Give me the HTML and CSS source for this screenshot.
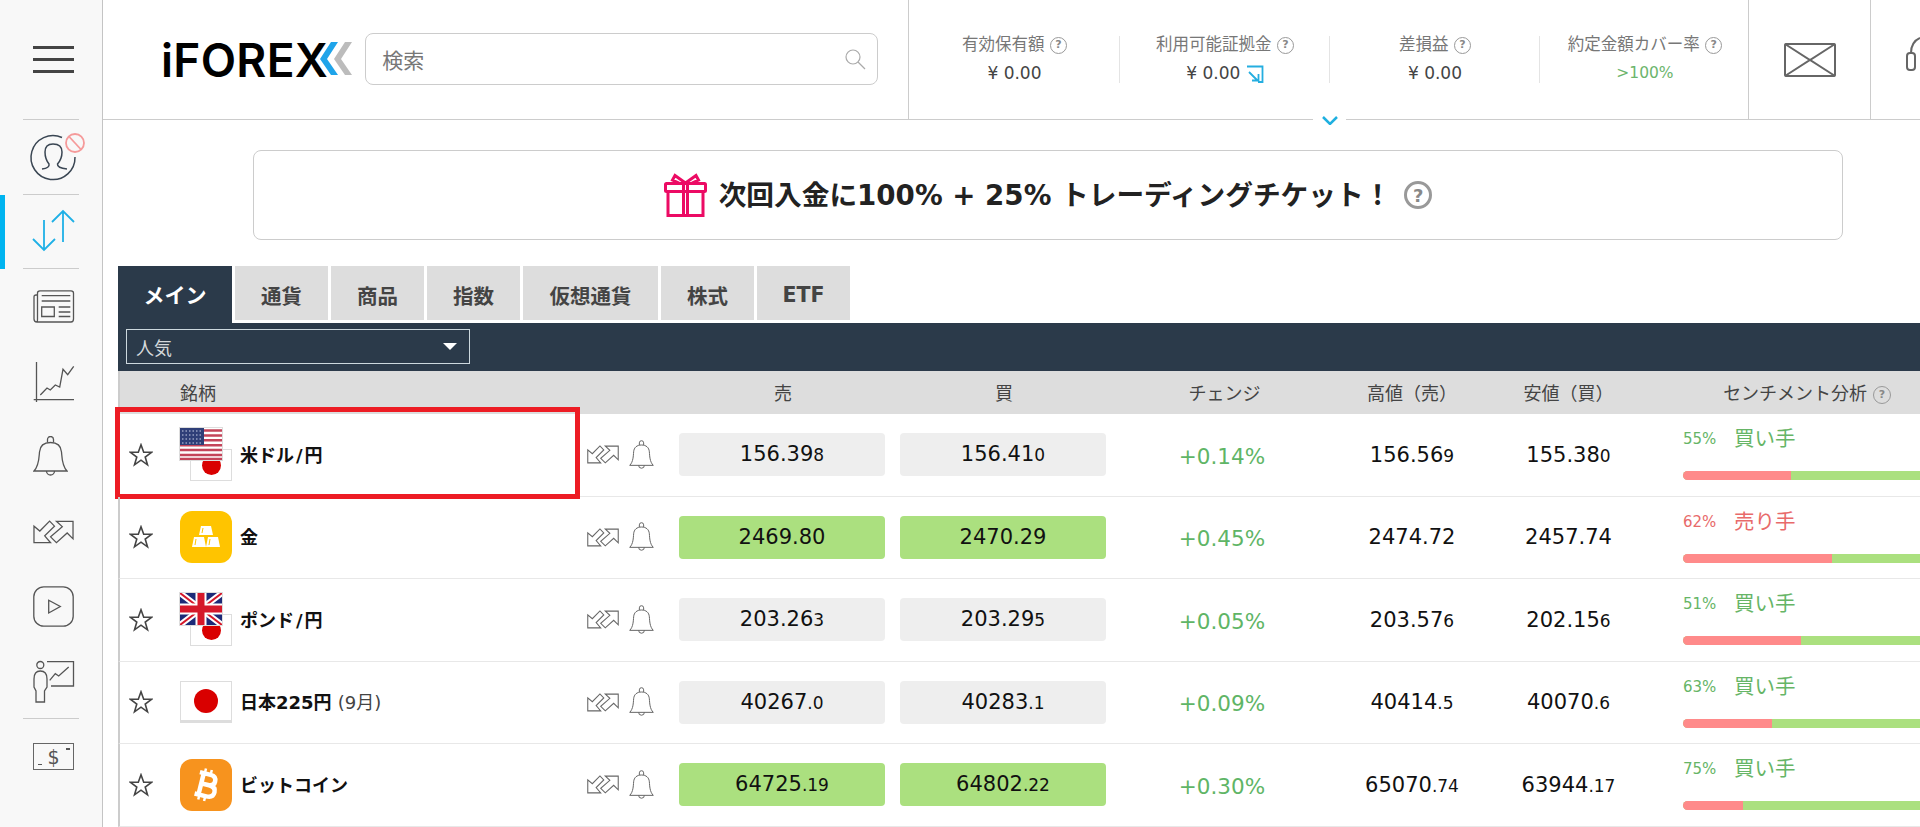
FILE: index.html
```html
<!DOCTYPE html>
<html lang="ja">

<head>
    <meta charset="UTF-8">
    <meta name="viewport" content="width=device-width, initial-scale=1.0">
    <title>iFOREX</title>
    <link rel="stylesheet" href="styles.css">
</head>

<body>
    <svg class="sprites" aria-hidden="true">
        <symbol id="icon-exchange" viewBox="0 0 42 24">
            <path d="M1 23V6L7 11L17 .8L22 6L12 16L18 23Z" />
            <path d="M41 1H24L30 6.500L18 17L24 23L35 13L41 19Z" />
        </symbol>
        <symbol id="icon-bell" viewBox="0 0 35 41">
            <path d="M1 35C6 30 6 22 6.500 16C7 10 11 6.500 17.500 6.500C24 6.500 28 10 28.500 16C29 22 29 30 34 35Z" />
            <path d="M14.500 6.500V3.500a3 3 0 0 1 6 0V6.500M13.500 35a4 4 0 0 0 8 0" />
        </symbol>
        <symbol id="icon-star" viewBox="0 0 24 24">
            <path d="M12 1.800L14.700 9.300H22.500L16.200 14L18.500 21.800L12 17.200L5.500 21.800L7.800 14L1.500 9.300H9.300Z" />
        </symbol>
    </svg>

    <div class="app">
        <nav class="sidebar">
            <div class="menu-cell">
                <span class="burger"></span>
            </div>
            <div class="side-cell">
                <svg class="cell-icon" viewBox="0 0 102 75">
                    <g fill="none" stroke="#3a4653" stroke-width="1.500">
                        <path d="M62 18.500A22 22 0 1 0 75 38" />
                        <path d="M42 50Q50 49 49 45Q45 40 45 33Q45 25 53 25Q62 25 62 33Q62 40 57.500 45Q57 49 67 50" />
                    </g>
                    <g fill="none" stroke="#f59a9a" stroke-width="1.800">
                        <circle cx="75" cy="24" r="9" />
                        <path d="M69 17.500L81 30.500" />
                    </g>
                </svg>
            </div>
            <div class="side-cell side-active">
                <svg class="cell-icon" viewBox="0 0 102 75">
                    <g fill="none" stroke="#1fb0e6" stroke-width="1.800">
                        <path d="M44 26V56M33 45L44 56L55 45" />
                        <path d="M63 48V17M52 28L63 17L74 28" />
                    </g>
                </svg>
            </div>
            <a class="side-item">
                <svg class="side-icon" width="41" height="33" viewBox="0 0 41 33">
                    <path d="M4 5H3Q1 5 1 7V29Q1 32 4 32H38Q40.500 32 40.500 29V3Q40.500 .8 38 .8H7Q4.500 .8 4.500 3V29Q4.500 32 4 32" />
                    <path d="M8.700 5.700H37.300M8.700 11H37.300M8.700 17H21.300V26.500H8.700ZM25.700 17H37.300M25.700 22H37.300M25.700 26.500H37.300" />
                </svg>
            </a>
            <a class="side-item">
                <svg class="side-icon" width="41" height="40" viewBox="0 0 41 40">
                    <path d="M3.500 0V40M.7 37.700H41" />
                    <path d="M7.300 33L14 26L17.300 28L22.300 23L26.700 25L30 7.300L34.700 12.700L40.700 4.300" />
                </svg>
            </a>
            <a class="side-item">
                <svg class="side-icon" width="35" height="41"><use href="#icon-bell" /></svg>
            </a>
            <a class="side-item">
                <svg class="side-icon" width="41" height="24"><use href="#icon-exchange" /></svg>
            </a>
            <a class="side-item">
                <svg class="side-icon" width="41" height="41" viewBox="0 0 41 41">
                    <rect x=".8" y=".8" width="39.400" height="39.400" rx="10" />
                    <path d="M15.700 14.300L27.300 20.500L15.700 27Z" />
                </svg>
            </a>
            <a class="side-item side-item-last">
                <svg class="side-icon" width="41" height="42" viewBox="0 0 41 42">
                    <circle cx="7.300" cy="4" r="3.500" />
                    <path d="M3 41V30L1 26V18Q1 10 7.300 10Q14 10 14 18V26L11.500 30V41Z" />
                    <path d="M14 .6H40.500V25H18" />
                    <path d="M16.700 19.300L22.300 12.700L25.700 15L35.700 6" />
                </svg>
            </a>
            <a class="side-item">
                <span class="cash">
                    <span class="cash-dash cash-dash-top"></span>
                    $
                    <span class="cash-dash cash-dash-bottom"></span>
                </span>
            </a>
        </nav>

        <main class="main">
            <header class="topbar">
                <div class="logo">
                    <span class="logo-text">iFOREX</span>
                    <svg class="logo-arrows" width="33" height="34" viewBox="0 0 33 34">
                        <path fill="#1fa4ea" d="M11 0H18L7 17L18 33H11L0 17Z" />
                        <path fill="#bcbcbc" d="M25 0H32L21 17L32 33H25L14 17Z" />
                    </svg>
                </div>
                <div class="search">
                    <span class="search-text">検索</span>
                    <svg class="search-icon" width="22" height="22" viewBox="0 0 22 22">
                        <circle cx="9" cy="9" r="7" />
                        <path d="M14 14L21 21" />
                    </svg>
                </div>
                <div class="stats">
                    <div class="stat">
                        <div class="stat-label">有効保有額 <span class="help">?</span></div>
                        <div class="stat-value">¥ 0.00</div>
                    </div>
                    <div class="stat">
                        <div class="stat-label">利用可能証拠金 <span class="help">?</span></div>
                        <div class="stat-value">¥ 0.00
                            <svg class="deposit-icon" width="18" height="18" viewBox="0 0 18 18">
                                <path d="M1 1.500H16.500V17H12" />
                                <path d="M3 7L12 16M12.500 9V15.500H6" />
                            </svg>
                        </div>
                    </div>
                    <div class="stat">
                        <div class="stat-label">差損益 <span class="help">?</span></div>
                        <div class="stat-value">¥ 0.00</div>
                    </div>
                    <div class="stat">
                        <div class="stat-label">約定金額カバー率 <span class="help">?</span></div>
                        <div class="stat-value stat-good">&gt;100%</div>
                    </div>
                </div>
                <div class="mail">
                    <svg class="mail-icon" width="52" height="34" viewBox="0 0 52 34">
                        <rect x="1" y="1" width="50" height="32" rx="1" />
                        <path d="M1 1L26 17L51 1M1 33L26 17L51 33" />
                    </svg>
                </div>
                <div class="support">
                    <svg class="support-icon" width="14" height="34" viewBox="0 0 14 34">
                        <rect x="1" y="16" width="8" height="17" rx="3" />
                        <path d="M5 16Q5 5 14 1" />
                    </svg>
                </div>
                <div class="topbar-toggle">
                    <svg width="16" height="9" viewBox="0 0 16 9">
                        <path d="M1 1L8 8L15 1" />
                    </svg>
                </div>
            </header>

            <section class="promo">
                <svg class="gift" width="44" height="44" viewBox="0 0 44 44">
                    <path d="M4 19V42.500H39V19" />
                    <rect x="1.500" y="10.500" width="40" height="8" rx="1" />
                    <path d="M19.500 10.500V42.500M23.500 10.500V42.500" />
                    <path d="M21.500 10L11 2.500L8.500 7L15 10M21.500 10L32 2.500L34.500 7L28 10" />
                </svg>
                <span class="promo-text">次回入金に100% + 25% トレーディングチケット！</span>
                <span class="help help-large">?</span>
            </section>

            <section class="market">
                <div class="tabs">
                    <a class="tab tab-active">メイン</a>
                    <a class="tab tab-w93">通貨</a>
                    <a class="tab tab-w93">商品</a>
                    <a class="tab tab-w93">指数</a>
                    <a class="tab tab-w135">仮想通貨</a>
                    <a class="tab tab-w93">株式</a>
                    <a class="tab tab-w93">ETF</a>
                </div>
                <div class="filter-bar">
                    <div class="filter">
                        <span>人気</span>
                        <span class="filter-arrow"></span>
                    </div>
                </div>

                <div class="table-head">
                    <span></span>
                    <span>銘柄</span>
                    <span></span>
                    <span class="head-center head-sell">売</span>
                    <span class="head-center head-buy">買</span>
                    <span class="head-center head-change">チェンジ</span>
                    <span class="head-center">高値（売）</span>
                    <span class="head-center">安値（買）</span>
                    <span class="head-sentiment">センチメント分析 <span class="help help-head">?</span></span>
                </div>

                <div class="row">
                    <div class="row-mark"></div>
                    <svg class="star" width="24" height="24"><use href="#icon-star" /></svg>
                    <div class="instrument">
                        <span class="flag-pair">
                            <svg class="flag flag-front" width="42" height="32" viewBox="0 0 42 32">
                                <rect width="42" height="32" fill="#fff" />
                                <path d="M0 2.500H42M0 7.400H42M0 12.300H42M0 17.200H42M0 22.100H42M0 27H42M0 31H42" stroke="#c4455a" stroke-width="2.500" />
                                <rect width="24" height="17" fill="#2f3f78" />
                                <path d="M2 3H22M2 7H22M2 11H22M2 15H22" stroke="#c9cfe6" stroke-width="1.200" stroke-dasharray="1.500 2" />
                            </svg>
                            <span class="flag-jp flag-back"><span class="sun sun-small"></span></span>
                        </span>
                        <span class="name">米ドル<span class="slash">/</span>円</span>
                    </div>
                    <div class="tools">
                        <svg class="tool" width="32" height="19"><use href="#icon-exchange" /></svg>
                        <svg class="tool" width="25" height="30"><use href="#icon-bell" /></svg>
                    </div>
                    <div class="price">156.39<small>8</small></div>
                    <div class="price price-buy">156.41<small>0</small></div>
                    <div class="change">+0.14%</div>
                    <div class="quote">156.56<small>9</small></div>
                    <div class="quote">155.38<small>0</small></div>
                    <div class="sentiment">
                        <div class="sent-text sent-buy"><span class="sent-pct">55%</span>買い手</div>
                        <div class="bar"><span class="bar-red" style="width: 45%"></span></div>
                    </div>
                </div>

                <div class="row">
                    <svg class="star" width="24" height="24"><use href="#icon-star" /></svg>
                    <div class="instrument">
                        <span class="app-icon app-gold">
                            <svg width="30" height="24" viewBox="0 0 30 24" fill="#fff">
                                <path d="M10 1H20L22 10H8Z" />
                                <path d="M3 12H13L15 22H1Z" />
                                <path d="M17 12H27L29 22H15Z" />
                                <path d="M12 3L11 8M5 14L4 20M19 14L18 20" stroke="#ffc400" />
                            </svg>
                        </span>
                        <span class="name">金</span>
                    </div>
                    <div class="tools">
                        <svg class="tool" width="32" height="19"><use href="#icon-exchange" /></svg>
                        <svg class="tool" width="25" height="30"><use href="#icon-bell" /></svg>
                    </div>
                    <div class="price price-up">2469.80</div>
                    <div class="price price-buy price-up">2470.29</div>
                    <div class="change">+0.45%</div>
                    <div class="quote">2474.72</div>
                    <div class="quote">2457.74</div>
                    <div class="sentiment">
                        <div class="sent-text sent-sell"><span class="sent-pct">62%</span>売り手</div>
                        <div class="bar"><span class="bar-red" style="width: 62%"></span></div>
                    </div>
                </div>

                <div class="row">
                    <svg class="star" width="24" height="24"><use href="#icon-star" /></svg>
                    <div class="instrument">
                        <span class="flag-pair">
                            <svg class="flag flag-front" width="42" height="32" viewBox="0 0 42 32">
                                <rect width="42" height="32" fill="#1c2a78" />
                                <path d="M0 0L42 32M42 0L0 32" stroke="#fff" stroke-width="6" />
                                <path d="M0 0L42 32M42 0L0 32" stroke="#d5182a" stroke-width="2" />
                                <path d="M21 0V32M0 16H42" stroke="#fff" stroke-width="11" />
                                <path d="M21 0V32M0 16H42" stroke="#d5182a" stroke-width="7" />
                            </svg>
                            <span class="flag-jp flag-back"><span class="sun sun-small"></span></span>
                        </span>
                        <span class="name">ポンド<span class="slash">/</span>円</span>
                    </div>
                    <div class="tools">
                        <svg class="tool" width="32" height="19"><use href="#icon-exchange" /></svg>
                        <svg class="tool" width="25" height="30"><use href="#icon-bell" /></svg>
                    </div>
                    <div class="price">203.26<small>3</small></div>
                    <div class="price price-buy">203.29<small>5</small></div>
                    <div class="change">+0.05%</div>
                    <div class="quote">203.57<small>6</small></div>
                    <div class="quote">202.15<small>6</small></div>
                    <div class="sentiment">
                        <div class="sent-text sent-buy"><span class="sent-pct">51%</span>買い手</div>
                        <div class="bar"><span class="bar-red" style="width: 49%"></span></div>
                    </div>
                </div>

                <div class="row">
                    <svg class="star" width="24" height="24"><use href="#icon-star" /></svg>
                    <div class="instrument">
                        <span class="flag-jp flag-single"><span class="sun"></span></span>
                        <span class="name">日本225円 <span class="name-month">(9月)</span></span>
                    </div>
                    <div class="tools">
                        <svg class="tool" width="32" height="19"><use href="#icon-exchange" /></svg>
                        <svg class="tool" width="25" height="30"><use href="#icon-bell" /></svg>
                    </div>
                    <div class="price">40267<small>.0</small></div>
                    <div class="price price-buy">40283<small>.1</small></div>
                    <div class="change">+0.09%</div>
                    <div class="quote">40414<small>.5</small></div>
                    <div class="quote">40070<small>.6</small></div>
                    <div class="sentiment">
                        <div class="sent-text sent-buy"><span class="sent-pct">63%</span>買い手</div>
                        <div class="bar"><span class="bar-red" style="width: 37%"></span></div>
                    </div>
                </div>

                <div class="row">
                    <svg class="star" width="24" height="24"><use href="#icon-star" /></svg>
                    <div class="instrument">
                        <span class="app-icon app-btc">
                            <svg width="30" height="38" viewBox="0 0 30 38" fill="none">
                                <g transform="rotate(14 15 19)" stroke="#fff">
                                    <path d="M11 3V9M17 3V9M11 29V35M17 29V35" stroke-width="2.500" />
                                    <path d="M6 8H17Q23 8 23 13.500Q23 18.500 17 18.500H9M9 18.500H18Q25 18.500 25 24Q25 30 18 30H6M10 8V30" stroke-width="4.500" />
                                </g>
                            </svg>
                        </span>
                        <span class="name">ビットコイン</span>
                    </div>
                    <div class="tools">
                        <svg class="tool" width="32" height="19"><use href="#icon-exchange" /></svg>
                        <svg class="tool" width="25" height="30"><use href="#icon-bell" /></svg>
                    </div>
                    <div class="price price-up">64725<small>.19</small></div>
                    <div class="price price-buy price-up">64802<small>.22</small></div>
                    <div class="change">+0.30%</div>
                    <div class="quote">65070<small>.74</small></div>
                    <div class="quote">63944<small>.17</small></div>
                    <div class="sentiment">
                        <div class="sent-text sent-buy"><span class="sent-pct">75%</span>買い手</div>
                        <div class="bar"><span class="bar-red" style="width: 25%"></span></div>
                    </div>
                </div>
            </section>
        </main>
    </div>
</body>

</html>
```

FILE: styles.css
```css
* {
    margin: 0;
    padding: 0;
    box-sizing: border-box;
}

html,
body {
    height: 827px;
    overflow: hidden;
    background: #fff;
}

body {
    font-family: "DejaVu Sans", "Noto Sans CJK JP", sans-serif;
    color: #222;
}

.sprites {
    display: none;
}

.app {
    display: flex;
    height: 827px;
}

/* sidebar */

.sidebar {
    flex: 0 0 103px;
    background: #f8f8f8;
    border-right: 1px solid #c4c4c4;
}

.menu-cell {
    height: 119px;
    display: flex;
    align-items: center;
    padding-left: 33px;
}

.burger {
    display: block;
    width: 41px;
    height: 27px;
    border-top: 3px solid #444;
    border-bottom: 3px solid #444;
    position: relative;
}

.burger:after {
    content: "";
    position: absolute;
    left: 0;
    right: 0;
    top: 9px;
    height: 3px;
    background: #444;
}

.side-cell {
    height: 75px;
    position: relative;
}

.side-cell:before {
    content: "";
    position: absolute;
    left: 23px;
    width: 56px;
    top: 0;
    height: 1px;
    background: #ccc;
}

.side-active:after {
    content: "";
    position: absolute;
    left: 23px;
    width: 56px;
    bottom: 0;
    height: 1px;
    background: #ccc;
}

/* the blue bar beside the current section */
.side-active {
    background: linear-gradient(#00b4f0, #00b4f0) no-repeat 0 1px / 5px 74px;
}

.cell-icon {
    display: block;
    width: 102px;
    height: 75px;
}

.side-item {
    height: 75px;
    display: flex;
    align-items: center;
    padding-left: 33px;
    position: relative;
}

.side-item-last:after {
    content: "";
    position: absolute;
    left: 23px;
    width: 56px;
    bottom: 0;
    height: 1px;
    background: #ccc;
}

.side-icon {
    fill: none;
    stroke: #555;
    stroke-width: 1.300;
    overflow: visible;
}

.cash {
    width: 41px;
    height: 27px;
    border: 1.500px solid #666;
    display: flex;
    align-items: center;
    justify-content: center;
    font-size: 19px;
    color: #555;
    position: relative;
}

.cash-dash {
    position: absolute;
    width: 4px;
    height: 1.500px;
    background: #555;
}

.cash-dash-top {
    top: 4px;
    right: 3px;
}

.cash-dash-bottom {
    bottom: 4px;
    left: 4px;
}

/* main column */

.main {
    flex: 1;
    min-width: 0;
    position: relative;
}

.topbar {
    height: 120px;
    border-bottom: 1px solid #ccc;
    display: flex;
    padding-left: 58px;
    position: relative;
}

.logo {
    width: 205px;
    height: 119px;
    display: flex;
    align-items: center;
}

.logo-text {
    font-family: Inter, sans-serif;
    font-size: 46px;
    font-weight: 600;
    color: #000;
    line-height: 1;
    letter-spacing: .3px;
}

.logo-arrows {
    margin-left: -8px;
    margin-top: -1px;
}

.search {
    width: 515px;
    height: 52px;
    margin-top: 33px;
    margin-right: 30px;
    border: 1px solid #ccc;
    border-radius: 8px;
    display: flex;
    align-items: center;
    justify-content: space-between;
    padding: 0 11px 0 16px;
    font-size: 21px;
    color: #777;
}

.search-icon {
    fill: none;
    stroke: #aaa;
    stroke-width: 1.200;
}

.stats {
    width: 840px;
    height: 119px;
    border-left: 1px solid #ccc;
    display: grid;
    grid-template-columns: repeat(4, 210px);
    align-items: center;
}

.stat {
    height: 47px;
    border-left: 1px solid #e4e4e4;
    text-align: center;
}

.stat:first-child {
    border-left: 0;
}

.stat-label {
    font-size: 16.500px;
    line-height: 20px;
    margin-top: -1px;
    color: #777;
}

.stat-value {
    font-size: 17px;
    line-height: 20px;
    margin-top: 8px;
    color: #444;
}

.stat-good {
    color: #6cb56c;
    font-size: 15.500px;
}

.deposit-icon {
    fill: none;
    stroke: #25aee0;
    stroke-width: 1.800;
    vertical-align: -4px;
}

.help {
    display: inline-block;
    width: 17px;
    height: 17px;
    line-height: 14px;
    border: 1.500px solid #999;
    border-radius: 50%;
    color: #888;
    font-size: 11px;
    font-weight: bold;
    text-align: center;
    vertical-align: 2px;
}

.help-large {
    width: 28px;
    height: 28px;
    line-height: 23px;
    border-width: 3px;
    font-size: 18px;
    margin-left: 13px;
    vertical-align: 0;
}

.help-head {
    width: 18px;
    height: 18px;
    line-height: 15px;
    font-size: 11px;
}

.mail {
    width: 122px;
    height: 119px;
    border-left: 1px solid #ccc;
    display: flex;
    align-items: center;
    justify-content: center;
}

.mail-icon {
    fill: none;
    stroke: #666;
    stroke-width: 2;
}

.support {
    border-left: 1px solid #ccc;
    height: 119px;
    padding: 37px 0 0 35px;
    flex: 1;
}

.support-icon {
    fill: none;
    stroke: #666;
    stroke-width: 2;
    display: block;
}

.topbar-toggle {
    position: absolute;
    left: 1210px;
    top: 114px;
    width: 33px;
    height: 12px;
    background: #fff;
    display: flex;
    align-items: center;
    justify-content: center;
}

.topbar-toggle path {
    fill: none;
    stroke: #1fb0e0;
    stroke-width: 2.500;
}

/* promo banner */

.promo {
    width: 1590px;
    height: 90px;
    margin: 30px 0 0 150px;
    border: 1px solid #ccc;
    border-radius: 8px;
    display: flex;
    align-items: center;
    justify-content: center;
}

.gift {
    fill: none;
    stroke: #ec0b64;
    stroke-width: 3;
    margin-right: 11px;
}

.promo-text {
    font-size: 27.700px;
    font-weight: bold;
    color: #222;
    margin-bottom: 4px;
}

/* market table */

.market {
    margin: 26px 0 0 15px;
    width: 1830px;
}

.tabs {
    display: flex;
    gap: 3px;
    height: 57px;
}

.tab {
    height: 54px;
    display: flex;
    align-items: center;
    justify-content: center;
    background: #ddd;
    color: #444;
    font-size: 20.500px;
    font-weight: bold;
    padding-top: 3px;
}

.tab-active {
    width: 114px;
    height: 57px;
    background: #2b3a4a;
    color: #fff;
    font-size: 21px;
    padding: 0 0 1px;
}

.tab-w93 {
    width: 93px;
}

.tab-w135 {
    width: 135px;
}

.filter-bar {
    height: 48px;
    background: #2b3a4a;
    padding: 6px 8px;
}

.filter {
    width: 344px;
    height: 35px;
    border: 1px solid #cdd8de;
    display: flex;
    align-items: center;
    justify-content: space-between;
    padding: 0 12px 0 9px;
    color: #d5d9dc;
    font-size: 18px;
}

.filter-arrow {
    width: 0;
    height: 0;
    border-left: 7px solid transparent;
    border-right: 7px solid transparent;
    border-top: 7px solid #fff;
}

.table-head,
.row {
    display: grid;
    grid-template-columns: 60px 400px 99px 206px 221px 241px 130px 183px 270px;
    align-items: center;
    border-left: 2px solid #ccc;
}

.table-head {
    height: 43px;
    padding-bottom: 1px;
    background: #ddd;
    font-size: 18px;
    color: #444;
}

.head-center {
    text-align: center;
}

.head-sell {
    padding-left: 2px;
}

.head-buy {
    padding-left: 17px;
}

.head-change {
    padding-right: 4px;
}

.head-sentiment {
    text-align: center;
    padding-left: 24px;
}

.row {
    height: 82.500px;
    border-bottom: 1px solid #e8e8e8;
    position: relative;
}

/* red box round the first row */
.row-mark {
    position: absolute;
    left: -5px;
    top: -7px;
    width: 465px;
    height: 92px;
    border: 5px solid #ed1c24;
}

.star {
    fill: none;
    stroke: #444;
    stroke-width: 1.600;
    margin-left: 9px;
}

.instrument {
    display: flex;
    align-items: center;
    gap: 8px;
}

.name {
    font-size: 18px;
    font-weight: bold;
    color: #111;
    white-space: nowrap;
    padding-bottom: 2px;
}

.slash {
    margin: 0 2px;
}

.name-month {
    font-size: 18px;
    font-weight: normal;
    color: #444;
}

.flag-pair {
    display: block;
    position: relative;
    width: 52px;
    height: 53px;
}

.flag {
    display: block;
}

.flag-front {
    position: absolute;
    left: 0;
    top: 0;
    z-index: 1;
    outline: 1px solid #ddd;
}

.flag-jp {
    display: flex;
    align-items: center;
    justify-content: center;
    background: #fff;
    border: 1px solid #ddd;
}

.flag-back {
    position: absolute;
    left: 10px;
    top: 21px;
    width: 42px;
    height: 32px;
}

.flag-single {
    width: 52px;
    height: 42px;
    border-bottom-width: 3px;
}

.sun {
    display: block;
    width: 24px;
    height: 24px;
    border-radius: 50%;
    background: #d90000;
}

.sun-small {
    width: 19px;
    height: 19px;
}

.app-icon {
    width: 52px;
    height: 52px;
    border-radius: 12px;
    display: flex;
    align-items: center;
    justify-content: center;
}

.app-gold {
    background: #ffc400;
}

.app-btc {
    background: #f7931e;
}

.tools {
    display: flex;
    align-items: center;
    gap: 10px;
    padding-left: 7px;
}

.tool {
    fill: none;
    stroke: #666;
    stroke-width: 1.400;
}

.price {
    height: 43px;
    width: 206px;
    background: #eee;
    border-radius: 4px;
    display: flex;
    align-items: baseline;
    justify-content: center;
    font-size: 21px;
    line-height: 43px;
    color: #111;
}

.price-buy {
    margin-left: 15px;
}

.price-up {
    background: #abe07f;
}

small {
    font-size: 17px;
}

.change {
    text-align: center;
    font-size: 21.500px;
    color: #5fb566;
    padding: 3px 9px 0 0;
}

.quote {
    text-align: center;
    font-size: 21px;
    color: #111;
}

.sentiment {
    align-self: start;
    padding: 9px 0 0 23px;
}

.sent-text {
    display: flex;
    align-items: center;
    height: 28px;
    margin-bottom: 20px;
    font-size: 20.500px;
}

.sent-pct {
    width: 51px;
    padding-top: 4px;
    font-size: 15px;
}

.sent-buy {
    color: #66b566;
}

.sent-sell {
    color: #e86a6a;
}

.bar {
    width: 240px;
    height: 9px;
    background: #abe07f;
    border-radius: 5px 0 0 5px;
    overflow: hidden;
}

.bar-red {
    display: block;
    height: 9px;
    background: #ff8a8a;
}
```
